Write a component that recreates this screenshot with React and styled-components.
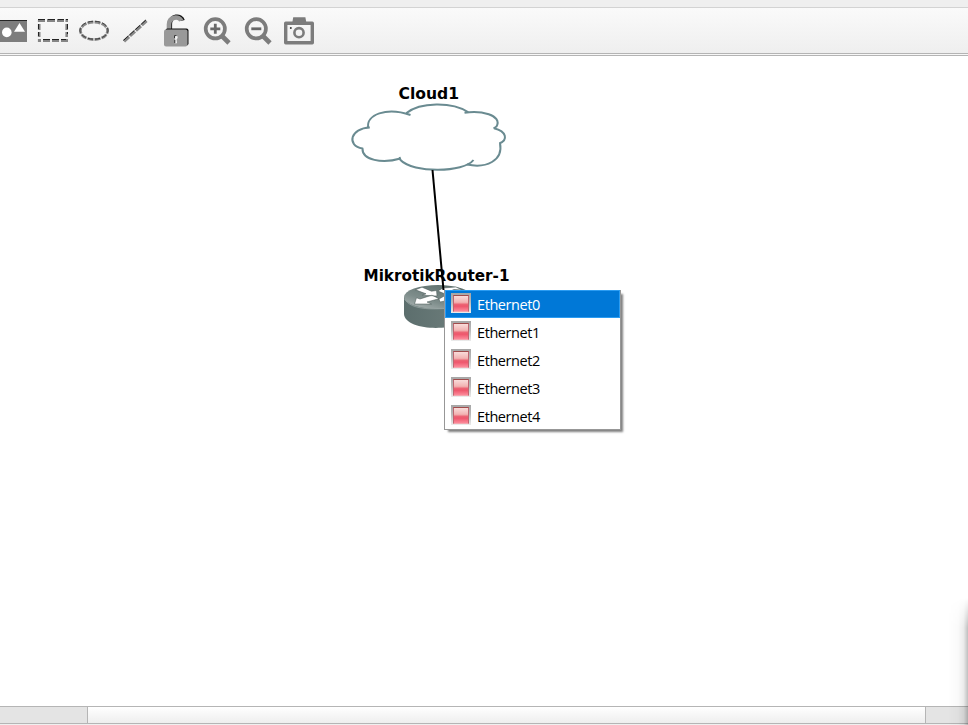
import React from "react";
import styled, { createGlobalStyle } from "styled-components";

const GlobalStyle = createGlobalStyle`
  * { box-sizing: border-box; }
  html, body { margin: 0; overflow: hidden; background: #fff; }
`;

const Window = styled.div`
  position: relative;
  display: flex;
  flex-direction: column;
  width: 968px;
  height: 725px;
  overflow: hidden;
  background: #fff;
`;
const TopStrip = styled.div`
  height: 8px;
  flex: none;
  background: #efefef;
  border-bottom: 1px solid #d3d3d3;
`;
const Toolbar = styled.div`
  display: flex;
  flex: none;
  height: 48px;
  padding-bottom: 3px;
  background: linear-gradient(#fafafa, #eeeeee);
  border-bottom: 1px solid #b4b4b4;
  box-shadow: inset 0 -1px #f7f7f7, inset 0 -2px #b4b4b4;
`;
const ToolButtons = styled.div`
  display: flex;
  margin-left: -8px;
`;
const Tool = styled.svg`
  display: block;
  flex: none;
  width: 41px;
  height: 44px;
`;
const Canvas = styled.main`
  position: relative;
  flex: 1;
  overflow: hidden;
  background: #fff;
`;
const Topology = styled.svg`
  display: block;
  width: 968px;
  height: 650px;
`;
const NodeLabel = styled.text`
  font: bold 16.4px "DejaVu Sans", sans-serif;
  fill: #000;
`;
const Menu = styled.ul`
  position: absolute;
  left: 444px;
  top: 234px;
  width: 177px;
  height: 140px;
  margin: 0;
  padding: 0 0 0 1px;
  list-style: none;
  background: #fff;
  border: 1px solid #979797;
  border-width: 0 1px 1px 0;
  box-shadow: inset 1px 0 #979797, 3px 3px 2px -1px rgba(0, 0, 0, 0.5);
`;
const MenuItem = styled.li`
  display: flex;
  align-items: center;
  height: 28px;
  gap: 6px;
  padding-left: 6px;
  font: 14.5px/28px "Open Sans", "Noto Sans", sans-serif;
  color: ${(p) => (p.$active ? "#fff" : "#000")};
  background: ${(p) => (p.$active ? "#0078d7" : "transparent")};
  box-shadow: ${(p) => (p.$active ? "inset 0 0 0 1px #2b9cf2" : "none")};
`;
const ItemName = styled.span`
  letter-spacing: -0.42px;
  padding-top: 1px;
`;
const Port = styled.i`
  flex: none;
  width: 20px;
  height: 20px;
  margin-top: -2px;
  padding: 2px;
  background: linear-gradient(#a6a6a6, #b9b9b9 45%, #ececec);
  &::before {
    content: "";
    display: block;
    height: 15px;
    border: 1px solid;
    border-color: #a04c4c #bd6670 #f5a5ae #bd6670;
    background: linear-gradient(#f9dcda 0, #f2b3b2 42%, #ec6474 56%, #ee566c 68%, #fc8a9a 100%);
  }
`;
const ScrollBar = styled.div`
  display: flex;
  flex: none;
  height: 18px;
  border: solid #b5b5b5;
  border-width: 1px 0;
  background: #e4e4e4;
`;
const Thumb = styled.div`
  width: 839px;
  margin-left: 87px;
  border: solid #b5b5b5;
  border-width: 0 1px;
  background: linear-gradient(#fff, #eeeeee);
`;
const BottomStrip = styled.div`
  height: 1px;
  flex: none;
  background: #efefef;
`;
const EdgeShadow = styled.div`
  position: absolute;
  right: 0;
  bottom: 0;
  width: 20px;
  height: 127px;
  background: linear-gradient(90deg, rgba(0,0,0,0), rgba(0,0,0,.02) 50%, rgba(0,0,0,.08) 78%, rgba(0,0,0,.25));
  mask-image: linear-gradient(transparent, #000 30px);
`;

const Annotate = () => (
  <Tool viewBox="-8 8 41 44">
    <path d="M-1 20H27V42H-1Z" fill="#7d7d7d" />
    <path d="M-1 20.5H27" stroke="#252525" />
    <circle cx="6.8" cy="32.4" r="4.8" fill="#fff" />
    <path d="M19.5 23L25 31.7H14Z" fill="#fff" />
  </Tool>
);
const RectTool = () => (
  <Tool viewBox="33 8 41 44" fill="none">
    <g stroke="#858585" strokeWidth="3">
      <path d="M38 20.5H45M47 20.5H55M57 20.5H64M66 20.5H68M38 40.5H41M43 40.5H50M52 40.5H59M61 40.5H68" />
      <path d="M39.2 20V22M39.2 24V30M39.2 32V37M39.2 39V42M66.7 19V22M66.7 24V30M66.7 32V37M66.7 39V42" strokeWidth="2.6" />
    </g>
    <path d="M38 19.5H45M48 19.5H55M58 19.5H64M66 19.5H68M43 39.5H50M52 39.5H59M61 39.5H66M38.5 24V29M38.5 32V36M67.5 24V29M67.5 32V34" stroke="#222" />
  </Tool>
);
const EllipseTool = () => (
  <Tool viewBox="74 8 41 44" fill="none">
    <ellipse cx="94" cy="30.8" rx="13.6" ry="8.7" stroke="#888" strokeWidth="2.8" pathLength="90" strokeDasharray="7.6 1.4" strokeDashoffset="3.8" />
    <ellipse cx="94" cy="30.2" rx="14" ry="9" stroke="#333" strokeWidth=".9" pathLength="90" strokeDasharray="6.4 2.6" strokeDashoffset="3.2" />
  </Tool>
);
const LineTool = () => (
  <Tool viewBox="115 8 41 44" fill="none" strokeDasharray="6.8 1.2">
    <path d="M124 41.3L146.5 20.8" stroke="#888" strokeWidth="3.2" />
    <path d="M123.5 40.4L145.8 20.1" stroke="#222" strokeWidth="1" />
  </Tool>
);
const LockTool = () => (
  <Tool viewBox="156 8 41 44">
    <path d="M170 31V24C170 15 181.5 14.5 182.7 20.5" fill="none" stroke="#111" strokeWidth="4.2" />
    <path d="M169 31V24.5C169 16.2 179.5 15.8 181.3 20.8" fill="none" stroke="#969696" strokeWidth="4.6" />
    <rect x="165.5" y="28.5" width="23" height="17" rx="2" fill="#111" />
    <rect x="164" y="29.5" width="23.5" height="17" rx="2" fill="#999" />
    <path d="M175 35.5q3-.6 2.6 2.5l-1 1.5.4 3.8h-2l.2-4z" fill="#f5f5f5" />
    <path d="M174.5 38V35.6H176.5M174.8 40V43" fill="none" stroke="#333" />
  </Tool>
);
const ZoomTool = ({ x, plus }) => (
  <Tool viewBox={`${x} 8 41 44`} fill="none">
    <path d={`M${x + 25} 36l7 7`} stroke="#7c7c7c" strokeWidth="4.6" />
    <circle cx={x + 18.3} cy="28.8" r="9.6" stroke="#7c7c7c" strokeWidth="3.7" />
    <path d={`M${x + 13.3} 28.8h10${plus ? "m-5-5v10" : ""}`} stroke="#686868" strokeWidth="2.8" />
  </Tool>
);
const CameraTool = () => (
  <Tool viewBox="279 8 41 44" fill="none" stroke="#7c7c7c">
    <path d="M285.7 23.2H312.3V42.8H285.7Z" strokeWidth="3.4" strokeLinejoin="round" />
    <path d="M293 22.5L293.8 18H304.8L305.6 22.5Z" fill="#7c7c7c" strokeWidth="1.4" />
    <circle cx="299" cy="32.7" r="4.6" strokeWidth="2.6" />
    <circle cx="290.8" cy="28" r="1" fill="#333" stroke="none" />
  </Tool>
);

const Cloud = () => (
  <g fill="none" stroke="#6a8b91" strokeWidth="2" strokeLinejoin="round">
    <path d="M369.8 127.5C350.5 128 346 145.5 362.5 148.5C362 160 382 164 400.5 158.5M368.2 127.8C366 115 386 106.5 410.5 115M406.5 113C420 102 452 101.5 468 112M464.5 112.8C480 110 503 115 496.5 126.5L493.5 128.5M494 128.3C507 131.5 508 140 499.3 143.5M500 143C503.5 161 486 168.5 467 164.5M399.5 157L400.5 160C413 173.5 464 172.5 473.5 160" />
  </g>
);
const Router = () => (
  <g>
    <path d="M404 297V314C405 332.5 465 332.5 472 314V297Z" fill="url(#routerSide)" />
    <ellipse cx="438" cy="297" rx="34" ry="12" fill="url(#routerTop)" />
    <path d="M404.5 299C411 310 433 311 465 306" fill="none" stroke="#9eaaa9" strokeWidth=".7" />
    <path d="M415.5 289.8L422 287.2L431.5 291.2L436.5 290.5L437 296L422.5 295.2L426 293.8ZM414.5 304L416.5 297.8L420 299L432 295.2L439 298.7L427 302L431.5 304ZM443 288L456 287L462 290L454 289.5L444 293.5L438 291ZM439 299L446 295L449 300L440 302Z" fill="#fff" stroke="#455452" strokeWidth=".5" />
  </g>
);

const interfaces = ["Ethernet0", "Ethernet1", "Ethernet2", "Ethernet3", "Ethernet4"];

export default function App() {
  return (
    <Window>
      <GlobalStyle />
      <TopStrip />
      <Toolbar>
        <ToolButtons>
          <Annotate />
          <RectTool />
          <EllipseTool />
          <LineTool />
          <LockTool />
          <ZoomTool x={197} plus />
          <ZoomTool x={238} />
          <CameraTool />
        </ToolButtons>
      </Toolbar>
      <Canvas>
        <Topology viewBox="0 56 968 650">
          <defs>
            <linearGradient id="routerSide">
              <stop offset="0" stopColor="#5c6e6d" />
              <stop offset=".6" stopColor="#687977" />
              <stop offset="1" stopColor="#536461" />
            </linearGradient>
            <linearGradient id="routerTop" x1="0" y1="1" x2=".8" y2="0">
              <stop offset="0" stopColor="#b2bbba" />
              <stop offset=".4" stopColor="#7e8d8b" />
              <stop offset="1" stopColor="#596c69" />
            </linearGradient>
          </defs>
          <Cloud />
          <Router />
          <path d="M432.5 170L443.5 290" stroke="#000" strokeWidth="2" />
          <NodeLabel x="398.5" y="99" textLength="60.5" lengthAdjust="spacingAndGlyphs">Cloud1</NodeLabel>
          <NodeLabel x="363.5" y="281" textLength="146" lengthAdjust="spacingAndGlyphs">MikrotikRouter-1</NodeLabel>
        </Topology>
        <Menu>
          {interfaces.map((name, i) => (
            <MenuItem key={name} $active={i === 0}>
              <Port />
              <ItemName>{name}</ItemName>
            </MenuItem>
          ))}
        </Menu>
      </Canvas>
      <ScrollBar>
        <Thumb />
      </ScrollBar>
      <BottomStrip />
      <EdgeShadow />
    </Window>
  );
}
